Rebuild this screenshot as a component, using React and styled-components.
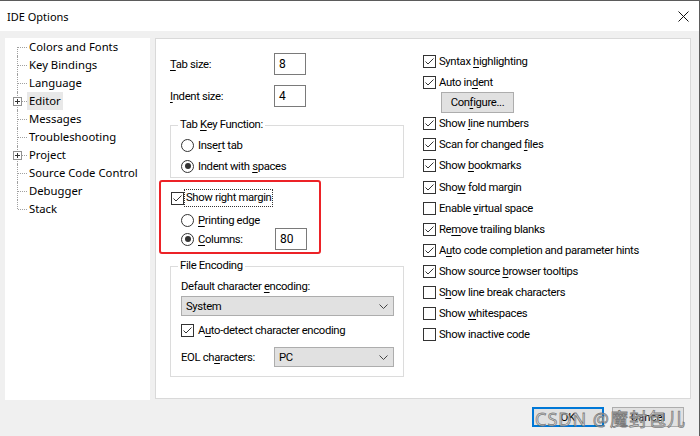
import React from "react";
import styled, { createGlobalStyle } from "styled-components";

const GlobalStyle = createGlobalStyle`
  body {
    margin: 0;
    background: #f0f0f0;
    font-family: "Noto Sans", "Liberation Sans", sans-serif;
    font-size: 12px;
    color: #000;
  }
  u {
    text-underline-offset: 2px;
  }
`;

const Window = styled.div`
  position: relative;
  width: 700px;
  height: 436px;
  box-sizing: border-box;
  border-top: 1px solid #5b5b5b;
  border-right: 1px solid #5b5b5b;
  background: #f0f0f0;
  display: flex;
  flex-direction: column;
  overflow: hidden;
`;

const TitleBar = styled.div`
  height: 30px;
  flex: none;
  background: #fff;
  display: flex;
  align-items: center;
  justify-content: space-between;
  padding: 0 10px 0 7px;
  font-size: 11px;
`;

const Main = styled.div`
  display: flex;
  gap: 5px;
  padding: 7px 8px 0 5px;
`;

const Tree = styled.div`
  width: 145px;
  height: 362px;
  flex: none;
  background: #fff;
  display: flex;
  flex-direction: column;
  font-size: 11.3px;
`;

const TreeRow = styled.div`
  height: 18px;
  display: flex;
  align-items: center;
`;

const Connector = styled.span`
  position: relative;
  width: 22px;
  height: 18px;
  flex: none;

  &::before {
    content: "";
    position: absolute;
    left: 12px;
    top: ${(p) => (p.$first ? "9px" : "0")};
    height: ${(p) => (p.$first || p.$last ? "9px" : "18px")};
    border-left: 1px dotted #a0a0a0;
  }
  &::after {
    content: "";
    position: absolute;
    left: 13px;
    top: 9px;
    width: 9px;
    border-top: 1px dotted #a0a0a0;
  }
`;

const PlusBox = styled.span`
  position: absolute;
  left: 8px;
  top: 5px;
  width: 9px;
  height: 9px;
  box-sizing: border-box;
  border: 1px solid #919191;
  background: #fff;
  z-index: 1;
  display: flex;
  align-items: center;
  justify-content: center;
`;

const TreeLabel = styled.span`
  padding: 0 2px;
  height: 18px;
  line-height: 18px;
  background: ${(p) => (p.$selected ? "#e8e8e8" : "transparent")};
  white-space: nowrap;
`;

const Page = styled.div`
  flex: 1;
  height: 361px;
  box-sizing: border-box;
  background: #fff;
  border: 1px solid #d9d9d9;
  display: grid;
  grid-template-columns: 234px 1fr;
  column-gap: 19px;
  align-items: start;
  padding: 12px 0 0 14px;
  font-family: "Roboto", "Liberation Sans", sans-serif;
  font-size: 11.3px;
  letter-spacing: -0.35px;
`;

const LeftCol = styled.div`
  display: flex;
  flex-direction: column;
  padding-top: 2px;
`;

const FieldRow = styled.div`
  height: 22px;
  display: flex;
  align-items: center;
  margin-top: ${(p) => p.$mt || 0}px;
`;

const FieldLabel = styled.span`
  width: ${(p) => p.$w || 104}px;
  flex: none;
  white-space: nowrap;
`;

const TextBox = styled.div`
  width: 32px;
  height: 22px;
  box-sizing: border-box;
  border: 1px solid #7a7a7a;
  background: #fff;
  padding: 2px 0 0 4px;
  line-height: 16px;
  font-size: 12px;
  letter-spacing: 0;
`;

const Group = styled.fieldset`
  margin: ${(p) => p.$mt || 0}px 0 0 0;
  padding: 0 ${(p) => p.$pr || 0}px ${(p) => p.$pb || 0}px 10px;
  border: 1px solid #dcdcdc;
  min-width: 0;
  display: flex;
  flex-direction: column;
`;

const Legend = styled.legend`
  padding: 0 2px;
  margin-left: -3px;
  line-height: 16px;
`;

const OptionRow = styled.div`
  height: ${(p) => p.$h || 21}px;
  display: flex;
  align-items: center;
  gap: ${(p) => (p.$gap === undefined ? 4 : p.$gap)}px;
  margin-top: ${(p) => p.$mt || 0}px;
  margin-left: ${(p) => p.$ml || 0}px;
  white-space: nowrap;
`;

const RadioCircle = styled.span`
  width: 13px;
  height: 13px;
  box-sizing: border-box;
  border: 1px solid #333;
  border-radius: 50%;
  background: #fff;
  flex: none;
  display: flex;
  align-items: center;
  justify-content: center;

  &::after {
    content: "";
    width: 6px;
    height: 6px;
    border-radius: 50%;
    background: ${(p) => (p.$on ? "#333" : "transparent")};
  }
`;

const CheckSquare = styled.span`
  width: 13px;
  height: 13px;
  box-sizing: border-box;
  border: 1px solid #333;
  background: #fff;
  flex: none;
  display: flex;
`;

const RedFrame = styled.div`
  align-self: flex-start;
  width: 162px;
  box-sizing: border-box;
  margin: 2px 0 0 -11px;
  border: 2px solid #ec2227;
  border-radius: 3px;
  padding: 7px 0 2px 10px;
  display: flex;
  flex-direction: column;
`;

const FocusLabel = styled.span`
  outline: 1px dotted #333;
  outline-offset: 0;
  padding: 0 1px;
  line-height: 16px;
`;

const RadioLabel = styled.span`
  display: flex;
  align-items: center;
  gap: 4px;
  width: 94px;
  flex: none;
`;

const PlainText = styled.div`
  height: 16px;
  line-height: 16px;
  margin-top: ${(p) => p.$mt || 0}px;
  white-space: nowrap;
`;

const Select = styled.div`
  height: 20px;
  box-sizing: border-box;
  flex: ${(p) => (p.$fill ? 1 : "none")};
  border: 1px solid #adadad;
  background: #e1e1e1;
  display: flex;
  align-items: center;
  justify-content: space-between;
  padding: 0 5px 0 4px;
  margin-top: ${(p) => p.$mt || 0}px;
`;

const RightCol = styled.div`
  display: flex;
  flex-direction: column;
`;

const PushButton = styled.div`
  width: ${(p) => p.$w || 72}px;
  height: ${(p) => p.$h || 20}px;
  box-sizing: border-box;
  border: ${(p) => (p.$default ? "2px solid #0078d7" : "1px solid #adadad")};
  background: #e1e1e1;
  display: flex;
  align-items: center;
  justify-content: center;
  margin: ${(p) => p.$m || 0};
`;

const Footer = styled.div`
  display: flex;
  justify-content: flex-end;
  gap: 8px;
  padding: 7px 15px 0 0;
  font-family: "Roboto", "Liberation Sans", sans-serif;
  font-size: 11.3px;
`;

const Watermark = styled.div`
  position: absolute;
  right: 13px;
  bottom: 6px;
  font-family: "Noto Sans", "Noto Sans CJK SC", sans-serif;
  font-size: 18px;
  letter-spacing: 1px;
  line-height: 22px;
  color: rgba(225, 225, 225, 0.75);
  -webkit-text-stroke: 0.8px rgba(105, 105, 105, 0.85);
  pointer-events: none;
  white-space: nowrap;
`;

const Check = ({ on }) => (
  <CheckSquare>
    {on && (
      <svg width="11" height="11" viewBox="0 0 11 11">
        <path d="M1.5 5.5 L4 8 L9.5 2.5" fill="none" stroke="#333" strokeWidth="1" />
      </svg>
    )}
  </CheckSquare>
);

const Chevron = () => (
  <svg width="9" height="5" viewBox="0 0 9 5">
    <path d="M0.5 0.5 L4.5 4.5 L8.5 0.5" fill="none" stroke="#444" strokeWidth="1" />
  </svg>
);

const treeItems = [
  { label: "Colors and Fonts" },
  { label: "Key Bindings" },
  { label: "Language" },
  { label: "Editor", plus: true, selected: true },
  { label: "Messages" },
  { label: "Troubleshooting" },
  { label: "Project", plus: true },
  { label: "Source Code Control" },
  { label: "Debugger" },
  { label: "Stack" },
];

const options = [
  { on: true, text: <>Syntax <u>h</u>ighlighting</> },
  { on: true, text: <>Auto in<u>d</u>ent</>, button: true },
  { on: true, text: <>Show <u>l</u>ine numbers</> },
  { on: true, text: <>Scan for changed <u>f</u>iles</> },
  { on: true, text: <>Show <u>b</u>ookmarks</> },
  { on: true, text: <>Sho<u>w</u> fold margin</> },
  { on: false, text: <>Enable <u>v</u>irtual space</> },
  { on: true, text: <>Re<u>m</u>ove trailing blanks</> },
  { on: true, text: <>A<u>u</u>to code completion and parameter hints</> },
  { on: true, text: <>Show source <u>b</u>rowser tooltips</> },
  { on: false, text: <>S<u>h</u>ow line break characters</> },
  { on: false, text: <>Show <u>w</u>hitespaces</> },
  { on: false, text: <>Show inactive code</> },
];

export default function App() {
  return (
    <>
      <GlobalStyle />
      <Window>
        <TitleBar>
          <span>IDE Options</span>
          <svg width="11" height="11" viewBox="0 0 11 11">
            <path d="M0.5 0.5 L10.5 10.5 M10.5 0.5 L0.5 10.5" stroke="#111" strokeWidth="1" />
          </svg>
        </TitleBar>

        <Main>
          <Tree>
            {treeItems.map((it, i) => (
              <TreeRow key={it.label}>
                <Connector $first={i === 0} $last={i === treeItems.length - 1}>
                  {it.plus && (
                    <PlusBox>
                      <svg width="7" height="7" viewBox="0 0 7 7">
                        <path d="M1 3.5 H6 M3.5 1 V6" stroke="#333" strokeWidth="1" />
                      </svg>
                    </PlusBox>
                  )}
                </Connector>
                <TreeLabel $selected={it.selected}>{it.label}</TreeLabel>
              </TreeRow>
            ))}
          </Tree>

          <Page>
            <LeftCol>
              <FieldRow>
                <FieldLabel><u>T</u>ab size:</FieldLabel>
                <TextBox>8</TextBox>
              </FieldRow>
              <FieldRow $mt={10}>
                <FieldLabel><u>I</u>ndent size:</FieldLabel>
                <TextBox>4</TextBox>
              </FieldRow>

              <Group $mt={10} $pb={1}>
                <Legend>Tab <u>K</u>ey Function:</Legend>
                <OptionRow $mt={2}>
                  <RadioCircle />
                  <span>Inse<u>r</u>t tab</span>
                </OptionRow>
                <OptionRow $h={20}>
                  <RadioCircle $on />
                  <span>Indent with <u>s</u>paces</span>
                </OptionRow>
              </Group>

              <RedFrame>
                <OptionRow $h={18} $gap={1}>
                  <Check on />
                  <FocusLabel>Show right margin</FocusLabel>
                </OptionRow>
                <OptionRow $h={16} $mt={5} $ml={10}>
                  <RadioCircle />
                  <span><u>P</u>rinting edge</span>
                </OptionRow>
                <OptionRow $h={22} $ml={10} $gap={0}>
                  <RadioLabel>
                    <RadioCircle $on />
                    <span><u>C</u>olumns:</span>
                  </RadioLabel>
                  <TextBox>80</TextBox>
                </OptionRow>
              </RedFrame>

              <Group $mt={4} $pr={9} $pb={9}>
                <Legend>File Encoding</Legend>
                <PlainText $mt={5}>Default character <u>e</u>ncoding:</PlainText>
                <Select $mt={1}>
                  <span>System</span>
                  <Chevron />
                </Select>
                <OptionRow $h={16} $mt={6}>
                  <Check on />
                  <span>A<u>u</u>to-detect character encoding</span>
                </OptionRow>
                <OptionRow $h={20} $mt={9} $gap={0}>
                  <FieldLabel $w={93}>EOL ch<u>a</u>racters:</FieldLabel>
                  <Select $fill>
                    <span>PC</span>
                    <Chevron />
                  </Select>
                </OptionRow>
              </Group>
            </LeftCol>

            <RightCol>
              {options.map((o, i) => (
                <React.Fragment key={i}>
                  <OptionRow $h={21.1} $gap={3}>
                    <Check on={o.on} />
                    <span>{o.text}</span>
                  </OptionRow>
                  {o.button && (
                    <PushButton $w={73} $h={21} $m="-1px 0 0 18px">
                      Con<u>f</u>igure...
                    </PushButton>
                  )}
                </React.Fragment>
              ))}
            </RightCol>
          </Page>
        </Main>

        <Footer>
          <PushButton $default>OK</PushButton>
          <PushButton>Cancel</PushButton>
        </Footer>

        <Watermark>CSDN @魔封包儿</Watermark>
      </Window>
    </>
  );
}
